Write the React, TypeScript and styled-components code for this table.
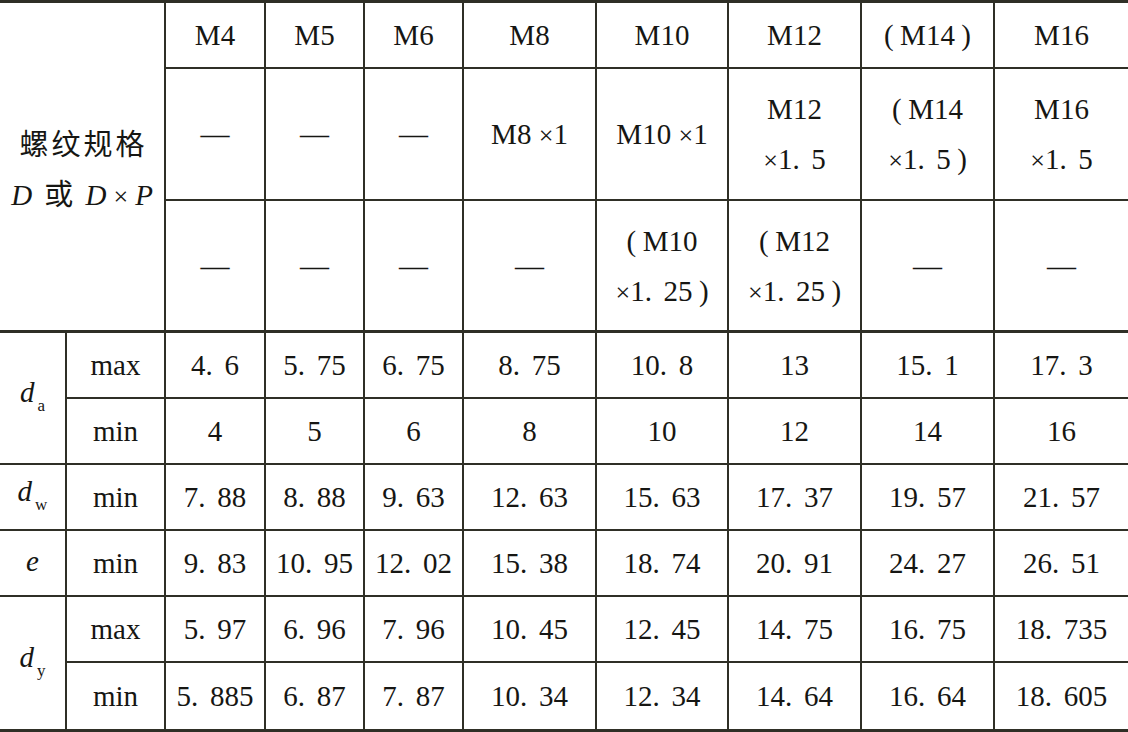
import React from 'react';
import styled, { createGlobalStyle } from 'styled-components';

const GlobalStyle = createGlobalStyle`
  html, body {
    margin: 0;
    padding: 0;
    background: #ffffff;
  }
`;

const LINE = '#2f2f26';

const Table = styled.div`
  display: grid;
  grid-template-columns: 67px 99px 100px 99px 99px 133px 132px 133px 133px 133px;
  grid-template-rows: 66px 132px 132px repeat(6, 66px);
  width: 1128px;
  border-top: 3px solid ${LINE};
  border-bottom: 3px solid ${LINE};
  background: #ffffff;
  color: #161613;
  font-family: 'Liberation Serif', 'DejaVu Serif', serif;
  font-size: 29px;
`;

type Bottom = 'thin' | 'thick' | 'none';

const Cell = styled.div<{ $rows?: number; $cols?: number; $bottom?: Bottom; $last?: boolean }>`
  box-sizing: border-box;
  grid-row: span ${({ $rows }) => $rows || 1};
  grid-column: span ${({ $cols }) => $cols || 1};
  display: flex;
  flex-direction: column;
  align-items: center;
  justify-content: center;
  border-right: ${({ $last }) => ($last ? 'none' : `2px solid ${LINE}`)};
  border-bottom: ${({ $bottom }) =>
    $bottom === 'none' ? 'none' : $bottom === 'thick' ? `3px solid ${LINE}` : `2px solid ${LINE}`};
  white-space: nowrap;
`;

const Line = styled.div`
  font-family: 'Liberation Serif', serif;
  line-height: 50px;
  height: 50px;
`;

const Dot = styled.span`
  margin-right: 0.4em;
`;

const Open = styled.span`
  margin-right: 0.22em;
`;

const Close = styled.span`
  margin-left: 0.22em;
`;

const Cross = styled.span<{ $spaced?: boolean }>`
  font-size: 0.9em;
  margin: ${({ $spaced }) => ($spaced ? '0 7px' : '0')};
`;

const Chinese = styled.span`
  font-family: 'Noto Sans CJK SC', sans-serif;
  letter-spacing: 3px;
  margin-right: -3px;
`;

const ChineseInline = styled.span`
  font-family: 'Noto Sans CJK SC', sans-serif;
  margin: 0 0.42em;
`;

const Var = styled.i`
  font-family: 'Liberation Serif', serif;
  font-style: italic;
`;

const Sub = styled.sub`
  font-family: 'Liberation Serif', serif;
  font-size: 17px;
  vertical-align: -9px;
  margin-left: 3px;
`;

const Symbol = styled.span`
  line-height: 1;
  position: relative;
  top: -2px;
`;

const renderLine = (s: string) =>
  s.split('').map((ch, i) => {
    if (ch === '.') return <Dot key={i}>.</Dot>;
    if (ch === '(') return <Open key={i}>(</Open>;
    if (ch === ')') return <Close key={i}>)</Close>;
    if (ch === '×') return <Cross key={i}>×</Cross>;
    return <React.Fragment key={i}>{ch}</React.Fragment>;
  });

const Text: React.FC<{ value: string }> = ({ value }) => (
  <>
    {value.split('\n').map((line, i) => (
      <Line key={i}>{renderLine(line)}</Line>
    ))}
  </>
);

const sizes = ['M4', 'M5', 'M6', 'M8', 'M10', 'M12', '(M14)', 'M16'];
const fine1 = ['—', '—', '—', 'M8 ×1', 'M10 ×1', 'M12\n×1.5', '(M14\n×1.5)', 'M16\n×1.5'];
const fine2 = ['—', '—', '—', '—', '(M10\n×1.25)', '(M12\n×1.25)', '—', '—'];

type DataRow = {
  symbol?: { base: string; sub?: string; rows: number };
  limit: string;
  values: string[];
  bottom: Bottom;
};

const rows: DataRow[] = [
  {
    symbol: { base: 'd', sub: 'a', rows: 2 },
    limit: 'max',
    values: ['4.6', '5.75', '6.75', '8.75', '10.8', '13', '15.1', '17.3'],
    bottom: 'thin',
  },
  {
    limit: 'min',
    values: ['4', '5', '6', '8', '10', '12', '14', '16'],
    bottom: 'thin',
  },
  {
    symbol: { base: 'd', sub: 'w', rows: 1 },
    limit: 'min',
    values: ['7.88', '8.88', '9.63', '12.63', '15.63', '17.37', '19.57', '21.57'],
    bottom: 'thin',
  },
  {
    symbol: { base: 'e', rows: 1 },
    limit: 'min',
    values: ['9.83', '10.95', '12.02', '15.38', '18.74', '20.91', '24.27', '26.51'],
    bottom: 'thin',
  },
  {
    symbol: { base: 'd', sub: 'y', rows: 2 },
    limit: 'max',
    values: ['5.97', '6.96', '7.96', '10.45', '12.45', '14.75', '16.75', '18.735'],
    bottom: 'thin',
  },
  {
    limit: 'min',
    values: ['5.885', '6.87', '7.87', '10.34', '12.34', '14.64', '16.64', '18.605'],
    bottom: 'none',
  },
];

const App: React.FC = () => {
  return (
    <>
      <GlobalStyle />
      <Table>
        <Cell $rows={3} $cols={2} $bottom="thick">
          <Line>
            <Chinese>螺纹规格</Chinese>
          </Line>
          <Line>
            <Var>D</Var>
            <ChineseInline>或</ChineseInline>
            <Var>D</Var>
            <Cross $spaced>×</Cross>
            <Var>P</Var>
          </Line>
        </Cell>
        {sizes.map((s, i) => (
          <Cell key={`s${i}`} $last={i === sizes.length - 1}>
            <Text value={s} />
          </Cell>
        ))}
        {fine1.map((s, i) => (
          <Cell key={`f1${i}`} $last={i === fine1.length - 1}>
            <Text value={s} />
          </Cell>
        ))}
        {fine2.map((s, i) => (
          <Cell key={`f2${i}`} $last={i === fine2.length - 1} $bottom="thick">
            <Text value={s} />
          </Cell>
        ))}
        {rows.map((row, r) => (
          <React.Fragment key={`r${r}`}>
            {row.symbol && (
              <Cell
                $rows={row.symbol.rows}
                $bottom={r + row.symbol.rows === rows.length ? 'none' : 'thin'}
              >
                <Symbol>
                  <Var>{row.symbol.base}</Var>
                  {row.symbol.sub && <Sub>{row.symbol.sub}</Sub>}
                </Symbol>
              </Cell>
            )}
            <Cell $bottom={row.bottom}>
              <Line>{row.limit}</Line>
            </Cell>
            {row.values.map((v, i) => (
              <Cell key={i} $bottom={row.bottom} $last={i === row.values.length - 1}>
                <Text value={v} />
              </Cell>
            ))}
          </React.Fragment>
        ))}
      </Table>
    </>
  );
};

export default App;
